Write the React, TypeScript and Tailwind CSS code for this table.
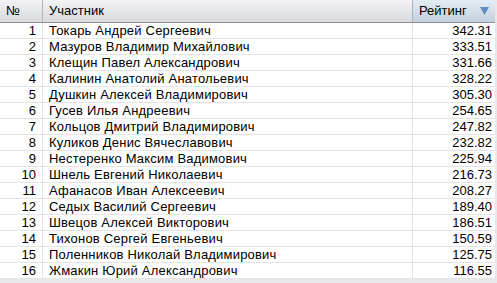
import React from 'react';

const rows: [string, string][] = [
  ['Токарь Андрей Сергеевич', '342.31'],
  ['Мазуров Владимир Михайлович', '333.51'],
  ['Клещин Павел Александрович', '331.66'],
  ['Калинин Анатолий Анатольевич', '328.22'],
  ['Душкин Алексей Владимирович', '305.30'],
  ['Гусев Илья Андреевич', '254.65'],
  ['Кольцов Дмитрий Владимирович', '247.82'],
  ['Куликов Денис Вячеславович', '232.82'],
  ['Нестеренко Максим Вадимович', '225.94'],
  ['Шнель Евгений Николаевич', '216.73'],
  ['Афанасов Иван Алексеевич', '208.27'],
  ['Седых Василий Сергеевич', '189.40'],
  ['Швецов Алексей Викторович', '186.51'],
  ['Тихонов Сергей Евгеньевич', '150.59'],
  ['Поленников Николай Владимирович', '125.75'],
  ['Жмакин Юрий Александрович', '116.55'],
];

export default function App() {
  return (
    <div className="w-[497px] h-[283px] bg-[#e8e8ea] overflow-hidden font-['Liberation_Sans',Arial,sans-serif] text-[13px] text-black">
      <div className="w-[495px] bg-white">
        <div className="flex h-[23px] border-b border-[#8c8c8c] bg-gradient-to-b from-[#f3f3f5] to-[#d8dadf]">
          <div className="w-[43px] border-r border-[#b4b4b8] flex items-center pl-[6px]">№</div>
          <div className="w-[370px] border-r border-[#b4b4b8] flex items-center pl-[6px]">Участник</div>
          <div className="flex-1 flex items-center justify-between pl-[6px] pr-[6px] bg-gradient-to-b from-[#e4ecf3] to-[#c3d2e0]">
            <span>Рейтинг</span>
            <svg width="9" height="8" viewBox="0 0 9 8">
              <path d="M0 0 H9 L4.5 8 Z" fill="#5f8fbf" />
            </svg>
          </div>
        </div>
        {rows.map(([name, score], i) => (
          <div key={i} className="flex h-[16px] border-b border-[#e4e4e4] leading-[15px]">
            <div className="w-[43px] border-r border-[#e4e4e4] text-right pr-[6px]">{i + 1}</div>
            <div className="w-[370px] border-r border-[#e4e4e4] pl-[6px] tracking-[0.2px]">{name}</div>
            <div className="flex-1 text-right pr-[3px]">{score}</div>
          </div>
        ))}
      </div>
    </div>
  );
}
